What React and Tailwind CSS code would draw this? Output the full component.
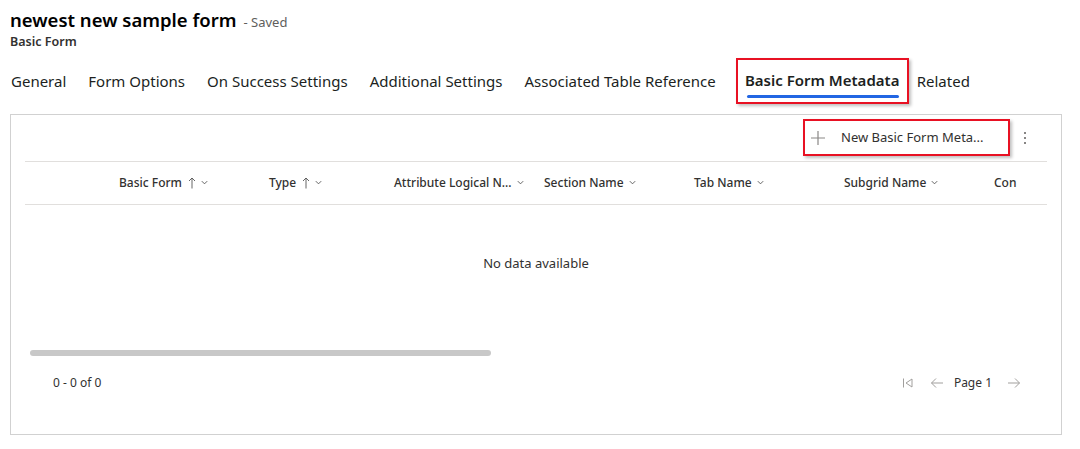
import React from 'react';

const tabs = [
  'General',
  'Form Options',
  'On Success Settings',
  'Additional Settings',
  'Associated Table Reference',
  'Basic Form Metadata',
  'Related',
];

const columns = [
  { label: 'Basic Form', sort: true, w: 'w-[150px]' },
  { label: 'Type', sort: true, w: 'w-[125px]' },
  { label: 'Attribute Logical N...', w: 'w-[150px]' },
  { label: 'Section Name', w: 'w-[150px]' },
  { label: 'Tab Name', w: 'w-[150px]' },
  { label: 'Subgrid Name', w: 'w-[150px]' },
  { label: 'Con', plain: true, w: 'w-[50px]' },
];

const Chevron = () => (
  <svg width="9" height="9" viewBox="0 0 10 10" className="ml-1 text-[#555]">
    <path d="M2 3.5 L5 6.5 L8 3.5" fill="none" stroke="currentColor" strokeWidth="1" />
  </svg>
);

const SortUp = () => (
  <svg width="8" height="12" viewBox="0 0 8 12" className="ml-1.5 text-[#555]">
    <path d="M4 11.5 V1 M1 4 L4 1 L7 4" fill="none" stroke="currentColor" strokeWidth="0.9" />
  </svg>
);

export default function App() {
  return (
    <div className="w-[1080px] h-[449px] bg-white text-[#201f1e] overflow-hidden" style={{ fontFamily: '"Segoe UI", "Noto Sans", sans-serif' }}>
      {/* Header */}
      <div className="pl-[10px] pt-[7px]">
        <div className="flex items-baseline">
          <h1 className="text-[18.5px] font-semibold leading-[25px] text-black">newest new sample form</h1>
          <span className="ml-[7px] text-[13px] text-[#605e5c]">- Saved</span>
        </div>
        <div className="text-[12.5px] font-semibold text-[#323130] leading-[16px] mt-[1px]">Basic Form</div>
      </div>

      {/* Tabs */}
      <div className="flex items-center pl-[11px] mt-[9px] h-[44px]">
        {tabs.map(t => {
          const active = t === 'Basic Form Metadata';
          if (active) {
            return (
              <div key={t} className="relative -ml-[2px] mr-[8px] h-[46px] w-[173px] border-2 border-[#e81123] shadow-[2px_2px_3px_rgba(0,0,0,0.25)] flex items-center justify-center">
                <span className="text-[15px] font-semibold text-[#201f1e] leading-[20px] pb-[1px] whitespace-nowrap">{t}</span>
                <span className="absolute left-[9px] right-[8px] bottom-[4px] h-[3px] rounded-full bg-[#2266e3]" />
              </div>
            );
          }
          return (
            <span key={t} className="text-[15px] leading-[20px] mr-[22px] whitespace-nowrap text-[#201f1e]">{t}</span>
          );
        })}
      </div>

      {/* Panel */}
      <div className="mx-[10px] mt-[11px] w-[1052px] h-[321px] border border-[#d1d1d1] flex flex-col">
        {/* Command bar */}
        <div className="flex justify-end items-center h-[46px] pr-[33px]">
          <div className="h-[37px] w-[207px] border-2 border-[#e81123] shadow-[2px_2px_3px_rgba(0,0,0,0.25)] flex items-center pl-[5px]">
            <svg width="16" height="16" viewBox="0 0 16 16" className="text-[#8a8886]">
              <path d="M8 1 V15 M1 8 H15" fill="none" stroke="currentColor" strokeWidth="1.2" />
            </svg>
            <span className="ml-[15px] text-[13px] text-[#323130] whitespace-nowrap">New Basic Form Meta...</span>
          </div>
          <div className="ml-[12px] w-[6px] flex flex-col items-center gap-[3px]">
            <span className="w-[2px] h-[2px] bg-[#605e5c] rounded-full" />
            <span className="w-[2px] h-[2px] bg-[#605e5c] rounded-full" />
            <span className="w-[2px] h-[2px] bg-[#605e5c] rounded-full" />
          </div>
        </div>

        {/* Grid */}
        <div className="mx-[14px] border-t border-[#e1dfdd]">
          <div className="flex items-center h-[43px] border-b border-[#e1dfdd] pl-[94px]">
            {columns.map(c => (
              <div key={c.label} className={`${c.w} shrink-0 flex items-center text-[12px] font-medium text-[#323130]`}>
                <span className="whitespace-nowrap">{c.label}</span>
                {c.sort && <SortUp />}
                {!c.plain && <Chevron />}
              </div>
            ))}
          </div>
          <div className="h-[117px] flex items-center justify-center text-[13px] text-[#323130] pt-[1px]">
            No data available
          </div>
        </div>

        {/* Scrollbar */}
        <div className="ml-[19px] mt-[28px] w-[461px] h-[6px] rounded-full bg-[#c8c8c8]" />

        {/* Footer */}
        <div className="flex items-center justify-between mt-[18px] pl-[42px] pr-[40px] text-[12px] text-[#323130]">
          <span>0 - 0 of 0</span>
          <div className="flex items-center text-[#a19f9d]">
            <svg width="12" height="12" viewBox="0 0 12 12">
              <path d="M1.5 1.5 V10.5 M10 2 L4 6 L10 10 Z" fill="none" stroke="currentColor" strokeWidth="1" />
            </svg>
            <svg width="14" height="12" viewBox="0 0 14 12" className="ml-[16px]">
              <path d="M13 6 H1.5 M6 1.5 L1.5 6 L6 10.5" fill="none" stroke="currentColor" strokeWidth="1" />
            </svg>
            <span className="ml-[10px] text-[#323130]">Page 1</span>
            <svg width="14" height="12" viewBox="0 0 14 12" className="ml-[15px]">
              <path d="M1 6 H12.5 M8 1.5 L12.5 6 L8 10.5" fill="none" stroke="currentColor" strokeWidth="1" />
            </svg>
          </div>
        </div>
      </div>
    </div>
  );
}
